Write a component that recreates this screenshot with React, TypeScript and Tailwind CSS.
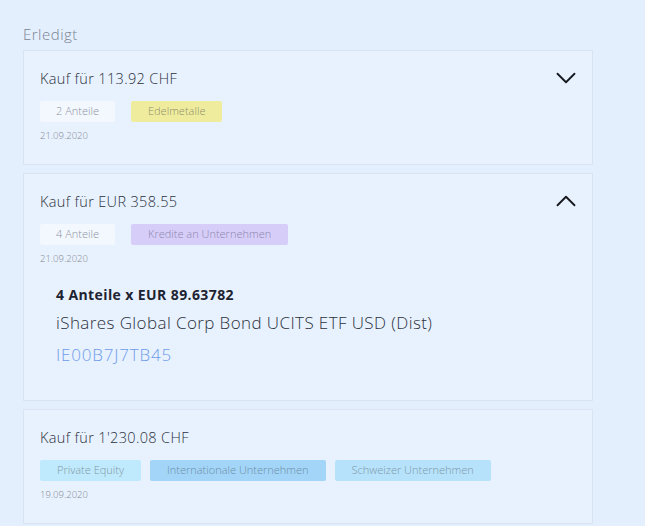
import { ChevronDown, ChevronUp } from "lucide-react";

type Tag = { label: string; className: string };

type Order = {
	title: string;
	count?: string;
	tags: Tag[];
	date: string;
	chevron?: "up" | "down";
	detail?: { qty: string; name: string; isin: string };
};

const orders: Order[] = [
	{
		title: "Kauf für 113.92 CHF",
		count: "2 Anteile",
		tags: [{ label: "Edelmetalle", className: "bg-[#efed9d] text-[#8f8f6c]" }],
		date: "21.09.2020",
		chevron: "down",
	},
	{
		title: "Kauf für EUR 358.55",
		count: "4 Anteile",
		tags: [{ label: "Kredite an Unternehmen", className: "bg-[#d6cdf9] text-[#8d87ad]" }],
		date: "21.09.2020",
		chevron: "up",
		detail: {
			qty: "4 Anteile x EUR 89.63782",
			name: "iShares Global Corp Bond UCITS ETF USD (Dist)",
			isin: "IE00B7J7TB45",
		},
	},
	{
		title: "Kauf für 1'230.08 CHF",
		tags: [
			{ label: "Private Equity", className: "bg-[#bfe9fc] text-[#7f9aa8]" },
			{ label: "Internationale Unternehmen", className: "bg-[#a2d5f8] text-[#6f8ea6]" },
			{ label: "Schweizer Unternehmen", className: "bg-[#b6e2fb] text-[#7f98a8]" },
		],
		date: "19.09.2020",
	},
];

const OrderCard = ({ order }: { order: Order }) => {
	const Chevron = order.chevron === "up" ? ChevronUp : ChevronDown;
	return (
		<div className="relative border border-[#d9e3f2] bg-[#e8f1fe] px-4 pt-[18px] pb-[21px]">
			<h3 className="text-[14.5px] leading-5 font-light tracking-[0.35px] text-[#2b313c]">{order.title}</h3>
			<div className="mt-3 flex gap-[9px]">
				{order.count && (
					<span className="mr-[7px] flex h-[21px] items-center rounded-[2px] bg-[#f3f7fe] px-4 text-[11px] font-light text-[#8d949f]">
						{order.count}
					</span>
				)}
				{order.tags.map((tag) => (
					<span
						key={tag.label}
						className={`flex h-[21px] items-center rounded-[2px] px-[17px] text-[11px] font-light ${tag.className}`}
					>
						{tag.label}
					</span>
				))}
			</div>
			<div className="mt-[7px] text-[9.5px] leading-[14px] font-light text-[#858b95]">{order.date}</div>
			{order.detail && (
				<div className="pl-4 pt-5 pb-3">
					<div className="text-[14px] leading-[18px] font-bold tracking-[0.4px] text-[#1d2331]">{order.detail.qty}</div>
					<div className="mt-[7px] text-[17px] leading-6 font-light tracking-[0.4px] text-[#2b313c]">{order.detail.name}</div>
					<div className="mt-2 text-[17px] leading-6 font-light tracking-[0.8px] text-[#6e9ce9]">{order.detail.isin}</div>
				</div>
			)}
			{order.chevron && (
				<Chevron
					className="absolute right-[9px] top-[10px] size-[34px] text-[#15181d]"
					strokeWidth={1.3}
				/>
			)}
		</div>
	);
};

export default function App() {
	return (
		<div
			className="min-h-[526px] w-[645px] bg-[#e4effe] pl-[23px] pt-[24px]"
			style={{ fontFamily: '"Open Sans", "Liberation Sans", sans-serif' }}
		>
			<h2 className="text-[15px] leading-5 font-light tracking-[0.5px] text-[#7b8391]">Erledigt</h2>
			<div className="mt-[6px] flex w-[570px] flex-col gap-2">
				{orders.map((order) => (
					<OrderCard key={order.title} order={order} />
				))}
			</div>
		</div>
	);
}
